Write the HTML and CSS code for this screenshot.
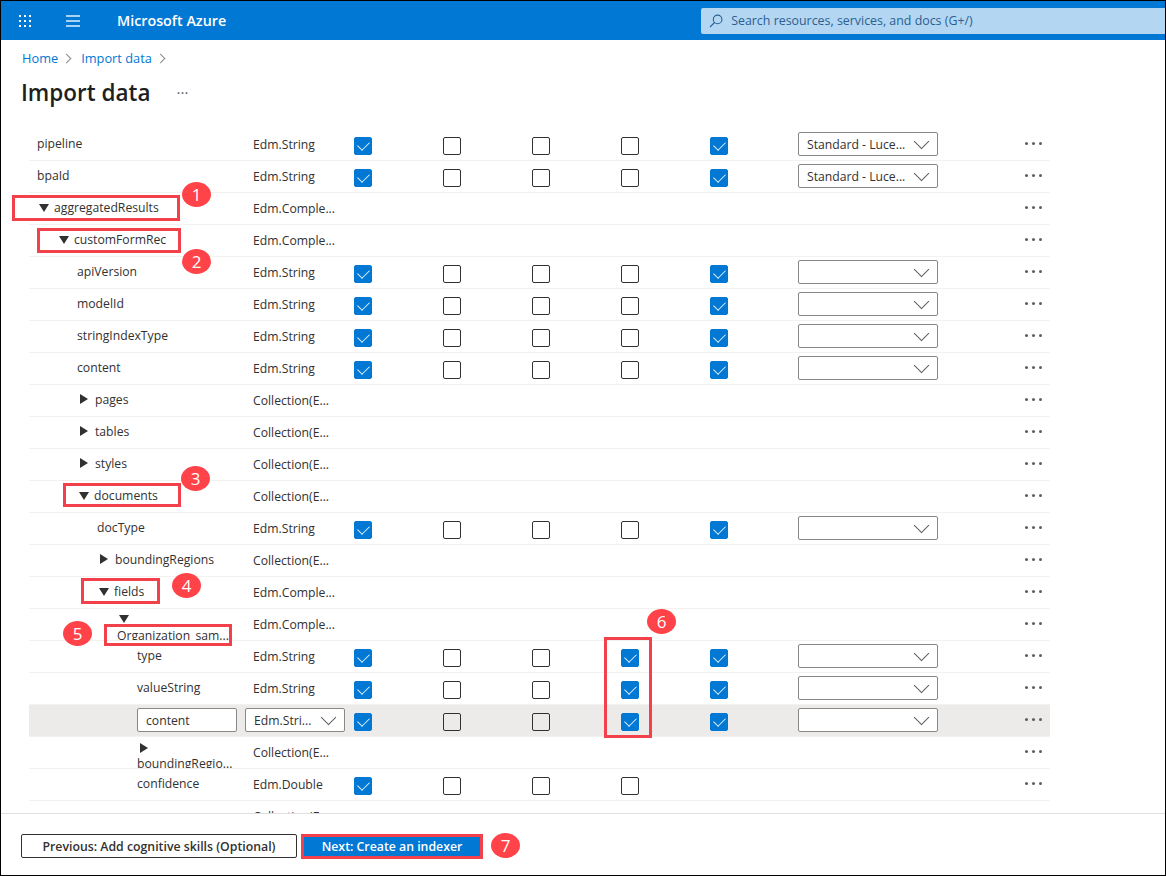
FILE: index.html
```html
<!DOCTYPE html>
<html lang="en">
<head>
    <meta charset="UTF-8">
    <meta name="viewport" content="width=device-width, initial-scale=1.0">
    <title>Import data - Microsoft Azure</title>
    <link rel="stylesheet" href="styles.css">
</head>
<body>
    <div class="frame">
        <header class="topbar">
            <svg class="waffle" width="12" height="12" viewBox="0 0 12 12" fill="#fff">
                <rect x="0" y="0" width="2" height="2"/><rect x="5" y="0" width="2" height="2"/><rect x="10" y="0" width="2" height="2"/>
                <rect x="0" y="5" width="2" height="2"/><rect x="5" y="5" width="2" height="2"/><rect x="10" y="5" width="2" height="2"/>
                <rect x="0" y="10" width="2" height="2"/><rect x="5" y="10" width="2" height="2"/><rect x="10" y="10" width="2" height="2"/>
            </svg>
            <span class="burger"></span>
            <span class="brand">Microsoft Azure</span>
            <div class="search">
                <svg width="14" height="14" viewBox="0 0 14 14" fill="none" stroke="#2b5f8f" stroke-width="1.1">
                    <circle cx="8.6" cy="5.4" r="4.3"/><path d="M5.5 8.5 L1 13"/>
                </svg>
                <span>Search resources, services, and docs (G+/)</span>
            </div>
        </header>

        <nav class="crumbs">
            <a>Home</a><span class="crumb-sep"></span><a>Import data</a><span class="crumb-sep"></span>
        </nav>
        <div class="title-line">
            <h1>Import data</h1>
            <span class="title-more">&middot;&middot;&middot;</span>
        </div>

        <main class="fields">
            <div class="row">
                <div class="name lvl-0">pipeline</div><div class="type">Edm.String</div>
                <span class="cb on"></span><span class="cb"></span><span class="cb"></span><span class="cb"></span><span class="cb on"></span>
                <div class="select"><span>Standard - Luce...</span></div><div class="more"></div>
            </div>
            <div class="row">
                <div class="name lvl-0">bpaId</div><div class="type">Edm.String</div>
                <span class="cb on"></span><span class="cb"></span><span class="cb"></span><span class="cb"></span><span class="cb on"></span>
                <div class="select"><span>Standard - Luce...</span></div><div class="more"></div>
            </div>
            <div class="row">
                <div class="name lvl-0"><i class="tri down"></i>aggregatedResults</div><div class="type">Edm.Comple...</div><div class="more"></div>
            </div>
            <div class="row">
                <div class="name lvl-1"><i class="tri down"></i>customFormRec</div><div class="type">Edm.Comple...</div><div class="more"></div>
            </div>
            <div class="row">
                <div class="name lvl-2">apiVersion</div><div class="type">Edm.String</div>
                <span class="cb on"></span><span class="cb"></span><span class="cb"></span><span class="cb"></span><span class="cb on"></span>
                <div class="select"></div><div class="more"></div>
            </div>
            <div class="row">
                <div class="name lvl-2">modelId</div><div class="type">Edm.String</div>
                <span class="cb on"></span><span class="cb"></span><span class="cb"></span><span class="cb"></span><span class="cb on"></span>
                <div class="select"></div><div class="more"></div>
            </div>
            <div class="row">
                <div class="name lvl-2">stringIndexType</div><div class="type">Edm.String</div>
                <span class="cb on"></span><span class="cb"></span><span class="cb"></span><span class="cb"></span><span class="cb on"></span>
                <div class="select"></div><div class="more"></div>
            </div>
            <div class="row">
                <div class="name lvl-2">content</div><div class="type">Edm.String</div>
                <span class="cb on"></span><span class="cb"></span><span class="cb"></span><span class="cb"></span><span class="cb on"></span>
                <div class="select"></div><div class="more"></div>
            </div>
            <div class="row">
                <div class="name lvl-2"><i class="tri right"></i>pages</div><div class="type">Collection(E...</div><div class="more"></div>
            </div>
            <div class="row">
                <div class="name lvl-2"><i class="tri right"></i>tables</div><div class="type">Collection(E...</div><div class="more"></div>
            </div>
            <div class="row">
                <div class="name lvl-2"><i class="tri right"></i>styles</div><div class="type">Collection(E...</div><div class="more"></div>
            </div>
            <div class="row">
                <div class="name lvl-2"><i class="tri down"></i>documents</div><div class="type">Collection(E...</div><div class="more"></div>
            </div>
            <div class="row">
                <div class="name lvl-3">docType</div><div class="type">Edm.String</div>
                <span class="cb on"></span><span class="cb"></span><span class="cb"></span><span class="cb"></span><span class="cb on"></span>
                <div class="select"></div><div class="more"></div>
            </div>
            <div class="row">
                <div class="name lvl-3"><i class="tri right"></i>boundingRegions</div><div class="type">Collection(E...</div><div class="more"></div>
            </div>
            <div class="row">
                <div class="name lvl-3"><i class="tri down"></i>fields</div><div class="type">Edm.Comple...</div><div class="more"></div>
            </div>
            <div class="row">
                <div class="name lvl-4 stacked"><i class="tri down"></i>Organization_sam...</div><div class="type">Edm.Comple...</div><div class="more"></div>
            </div>
            <div class="row">
                <div class="name lvl-5">type</div><div class="type">Edm.String</div>
                <span class="cb on"></span><span class="cb"></span><span class="cb"></span><span class="cb on"></span><span class="cb on"></span>
                <div class="select"></div><div class="more"></div>
            </div>
            <div class="row">
                <div class="name lvl-5">valueString</div><div class="type">Edm.String</div>
                <span class="cb on"></span><span class="cb"></span><span class="cb"></span><span class="cb on"></span><span class="cb on"></span>
                <div class="select"></div><div class="more"></div>
            </div>
            <div class="row editing">
                <div class="name lvl-5"><div class="text-box">content</div></div>
                <div class="select type-select"><span>Edm.Stri...</span></div>
                <span class="cb on"></span><span class="cb"></span><span class="cb"></span><span class="cb on"></span><span class="cb on"></span>
                <div class="select"></div><div class="more"></div>
            </div>
            <div class="row">
                <div class="name lvl-5 stacked"><i class="tri right"></i>boundingRegio...</div><div class="type">Collection(E...</div><div class="more"></div>
            </div>
            <div class="row">
                <div class="name lvl-5">confidence</div><div class="type">Edm.Double</div>
                <span class="cb on"></span><span class="cb"></span><span class="cb"></span><span class="cb"></span>
                <div class="more"></div>
            </div>
            <div class="row">
                <div class="name lvl-5">spans</div><div class="type">Collection(E...</div><div class="more"></div>
            </div>
        </main>

        <footer class="actions">
            <button class="btn">Previous: Add cognitive skills (Optional)</button>
            <button class="btn primary">Next: Create an indexer</button>
        </footer>

        <!-- callouts drawn over the screenshot -->
        <div class="mark mark-1"></div><div class="badge badge-1">1</div>
        <div class="mark mark-2"></div><div class="badge badge-2">2</div>
        <div class="mark mark-3"></div><div class="badge badge-3">3</div>
        <div class="mark mark-4"></div><div class="badge badge-4">4</div>
        <div class="mark mark-5"></div><div class="badge badge-5">5</div>
        <div class="mark mark-6"></div><div class="badge badge-6">6</div>
        <div class="badge badge-7">7</div>
    </div>
</body>
</html>
```

FILE: styles.css
```css
* {
    box-sizing: border-box;
}

body {
    margin: 0;
    overflow: hidden;
    font-family: "Open Sans", "Noto Sans", sans-serif;
    font-size: 12.2px;
    color: #323130;
    background: #fff;
}

.frame {
    position: relative;
    display: flex;
    flex-direction: column;
    width: 1166px;
    height: 876px;
    border: 1px solid #000;
}

/* top bar */
.topbar {
    display: flex;
    align-items: center;
    flex: none;
    height: 39px;
    background: #0078d4;
    color: #fff;
}

.waffle {
    margin-left: 18px;
}

.burger {
    width: 14px;
    height: 12px;
    margin-left: 35px;
    border-top: 2px solid #a9d3f2;
    border-bottom: 2px solid #a9d3f2;
    background: linear-gradient(#a9d3f2, #a9d3f2) center / 100% 2px no-repeat;
}

.brand {
    margin-left: 37px;
    font-size: 14.3px;
    font-weight: 600;
}

.search {
    display: flex;
    align-items: center;
    gap: 8px;
    flex: 1;
    height: 26px;
    margin-left: 475px;
    padding-left: 8px;
    border-radius: 2px 0 0 2px;
    background: #b3d6f2;
    color: #2b5f8f;
    font-size: 12.4px;
}

/* page heading */
.crumbs {
    display: flex;
    align-items: center;
    flex: none;
    height: 20px;
    margin: 8px 0 0 21px;
    font-size: 12.8px;
    color: #0078d4;
}

.crumb-sep {
    width: 7px;
    height: 7px;
    margin: 0 11px 0 5px;
    border-top: 1px solid #8a8886;
    border-right: 1px solid #8a8886;
    transform: rotate(45deg);
}

.title-line {
    display: flex;
    align-items: center;
    flex: none;
    height: 36px;
    margin: 6px 0 0 20px;
}

h1 {
    margin: 0;
    font-size: 22.5px;
    font-weight: 600;
    color: #201f1e;
}

.title-more {
    margin-left: 26px;
    font-size: 15px;
    color: #605e5c;
}

/* field table */
.fields {
    flex: 1;
    min-height: 0;
    margin: 19px 115px 0 28px;
    overflow: hidden;
}

.row {
    display: grid;
    grid-template-columns: 216px 109px 89px 89px 89px 89px 88px 140px 1fr;
    height: 32px;
    border-bottom: 1px solid #f3f2f1;
}

.row.editing {
    background: #edebe9;
}

.name {
    height: 31px;
    padding-top: 6px;
    line-height: 18px;
    overflow: hidden;
    white-space: nowrap;
}

.lvl-0 { padding-left: 8px; }
.lvl-1 { padding-left: 28px; }
.lvl-2 { padding-left: 48px; }
.lvl-3 { padding-left: 68px; }
.lvl-4 { padding-left: 88px; }
.lvl-5 { padding-left: 108px; }

.stacked .tri {
    display: block;
    margin-bottom: 4px;
}

.stacked .tri.right {
    margin-bottom: 2px;
}

.tri {
    display: inline-block;
    width: 0;
    height: 0;
    margin-left: 2px;
    margin-right: 5px;
    border-style: solid;
    border-color: transparent;
}

.tri.down {
    border-width: 8px 5px 0;
    border-top-color: #323130;
}

.tri.right {
    border-width: 5px 0 5px 8px;
    border-left-color: #323130;
    margin-left: 3px;
    margin-right: 7px;
}

.type {
    padding: 7px 0 0 8px;
    line-height: 18px;
    white-space: nowrap;
    grid-column: 2;
}

.cb {
    position: relative;
    width: 18px;
    height: 18px;
    margin-top: 8px;
    border: 1px solid #323130;
    border-radius: 2px;
}

.cb.on {
    border-color: #0078d4;
    background: #0078d4;
}

.cb.on::after {
    content: "";
    position: absolute;
    left: 3px;
    top: 3px;
    width: 10px;
    height: 6px;
    border-left: 1px solid #e6f2fb;
    border-bottom: 1px solid #e6f2fb;
    transform: rotate(-45deg);
}

.row > .cb:nth-of-type(1) { grid-column: 3; }

.select {
    position: relative;
    width: 140px;
    height: 24px;
    margin-top: 3px;
    padding: 3px 0 0 8px;
    border: 1px solid #8a8886;
    border-radius: 2px;
    background: #fff;
    line-height: 18px;
    grid-column: 8;
}

.select::after {
    content: "";
    position: absolute;
    right: 10px;
    top: 3px;
    width: 10px;
    height: 10px;
    border-right: 1px solid #605e5c;
    border-bottom: 1px solid #605e5c;
    transform: rotate(45deg);
}

.select.type-select {
    width: 100px;
    grid-column: 2;
}

.text-box {
    width: 100px;
    height: 24px;
    margin-top: -3px;
    padding: 3px 0 0 8px;
    border: 1px solid #8a8886;
    border-radius: 2px;
    background: #fff;
}

.more {
    position: relative;
    grid-column: 9;
}

.more::before {
    content: "";
    position: absolute;
    right: 8px;
    top: 13px;
    width: 3px;
    height: 3px;
    border-radius: 50%;
    background: #605e5c;
    box-shadow: -7px 0 0 #605e5c, -14px 0 0 #605e5c;
}

/* bottom buttons */
.actions {
    display: flex;
    align-items: flex-start;
    gap: 4px;
    flex: none;
    height: 62px;
    padding: 20px 0 0 20px;
    border-top: 1px solid #e1dfdd;
}

.btn {
    height: 24px;
    width: 276px;
    padding: 0;
    border: 1px solid #323130;
    border-radius: 2px;
    background: #fff;
    font: 600 12.3px "Open Sans", "Noto Sans", sans-serif;
    color: #323130;
}

.btn.primary {
    width: 182px;
    height: 25px;
    border: 3px solid #f2414b;
    border-radius: 0;
    background: #0078d4;
    color: #fff;
}

/* callouts */
.mark {
    position: absolute;
    border: 3px solid #f2414b;
}

.mark-1 { left: 11px; top: 194px; width: 168px; height: 26px; }
.mark-2 { left: 36px; top: 227px; width: 144px; height: 25px; }
.mark-3 { left: 62px; top: 482px; width: 118px; height: 24px; }
.mark-4 { left: 80px; top: 577px; width: 79px; height: 26px; }
.mark-5 { left: 103px; top: 623px; width: 128px; height: 22px; }
.mark-6 { left: 603px; top: 636px; width: 48px; height: 101px; }

.badge {
    position: absolute;
    width: 29px;
    height: 25px;
    border-radius: 50%;
    background: #ff4348;
    color: #fff;
    font-size: 17px;
    line-height: 25px;
    text-align: center;
}

.badge-1 { left: 181px; top: 181px; }
.badge-2 { left: 181px; top: 248px; }
.badge-3 { left: 180px; top: 465px; }
.badge-4 { left: 171px; top: 572px; }
.badge-5 { left: 62px; top: 620px; }
.badge-6 { left: 646px; top: 608px; }
.badge-7 { left: 490px; top: 832px; }
```
